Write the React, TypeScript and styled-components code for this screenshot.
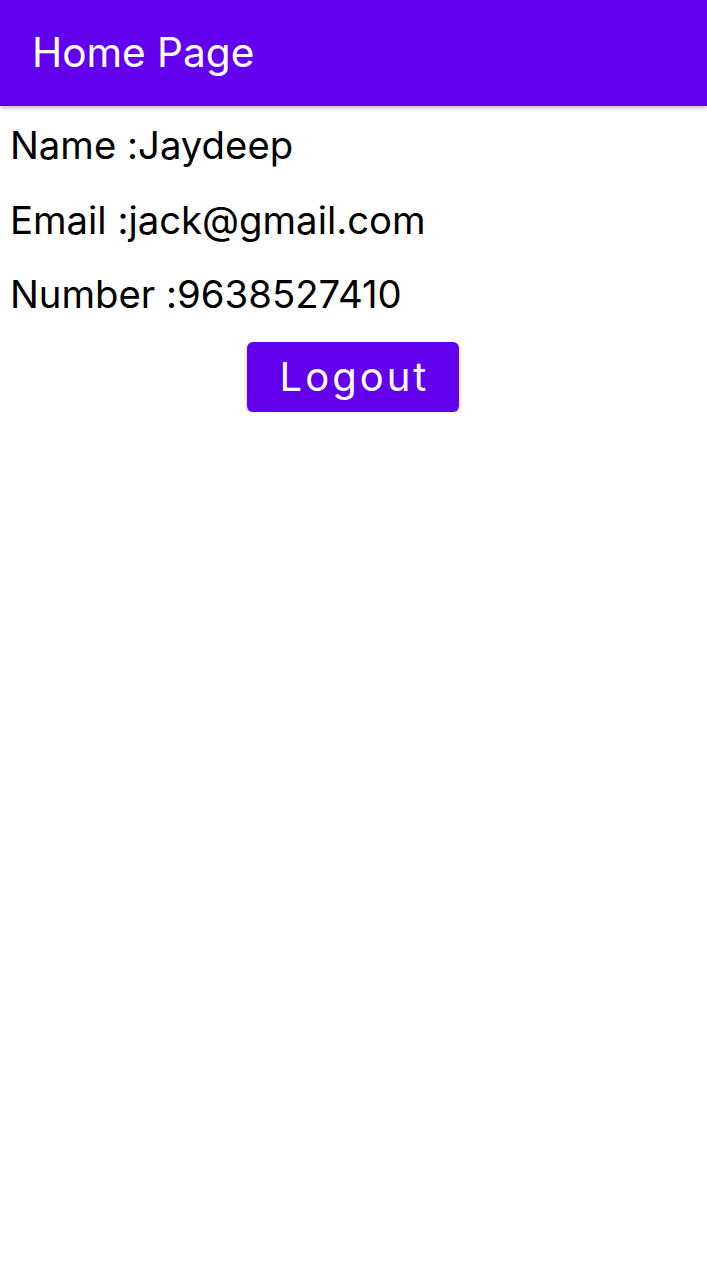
import React from "react";
import styled, { createGlobalStyle } from "styled-components";

const Global = createGlobalStyle`
  html, body { margin: 0; padding: 0; background: #ffffff; }
  body { font-family: Inter, "Noto Sans", sans-serif; font-feature-settings: "calt" 0; }
`;

const Header = styled.header`
  height: 106px;
  background: #6200ee;
  display: flex;
  align-items: center;
  padding-left: 32px;
  box-shadow: 0 2px 4px rgba(0, 0, 0, 0.25);
  position: relative;
  z-index: 1;
`;

const Title = styled.h1`
  margin: 0 0 2px;
  font-size: 40.6px;
  font-weight: 400;
  color: #ffffff;
`;

const Content = styled.main`
  display: flex;
  flex-direction: column;
  padding: 2px 10px 0;
`;

const Line = styled.div`
  font-size: 38.3px;
  line-height: 74.5px;
  color: #000000;
  height: 74.5px;
`;

const ButtonRow = styled.div`
  display: flex;
  justify-content: center;
  margin-top: 10px;
`;

const Button = styled.button`
  width: 212px;
  height: 70px;
  margin-left: -2px;
  background: #6200ee;
  color: #ffffff;
  border: none;
  border-radius: 6px;
  font-family: Inter, "Noto Sans", sans-serif;
  font-feature-settings: "calt" 0;
  font-size: 40px;
  letter-spacing: 3px;
  font-weight: 400;
  box-shadow: 0 2px 4px rgba(0, 0, 0, 0.25);
  padding: 0 0 0 4px;
`;

export default function App() {
  return (
    <>
      <Global />
      <Header>
        <Title>Home Page</Title>
      </Header>
      <Content>
        <Line>Name :Jaydeep</Line>
        <Line>Email :jack@gmail.com</Line>
        <Line>Number :9638527410</Line>
        <ButtonRow>
          <Button>Logout</Button>
        </ButtonRow>
      </Content>
    </>
  );
}
